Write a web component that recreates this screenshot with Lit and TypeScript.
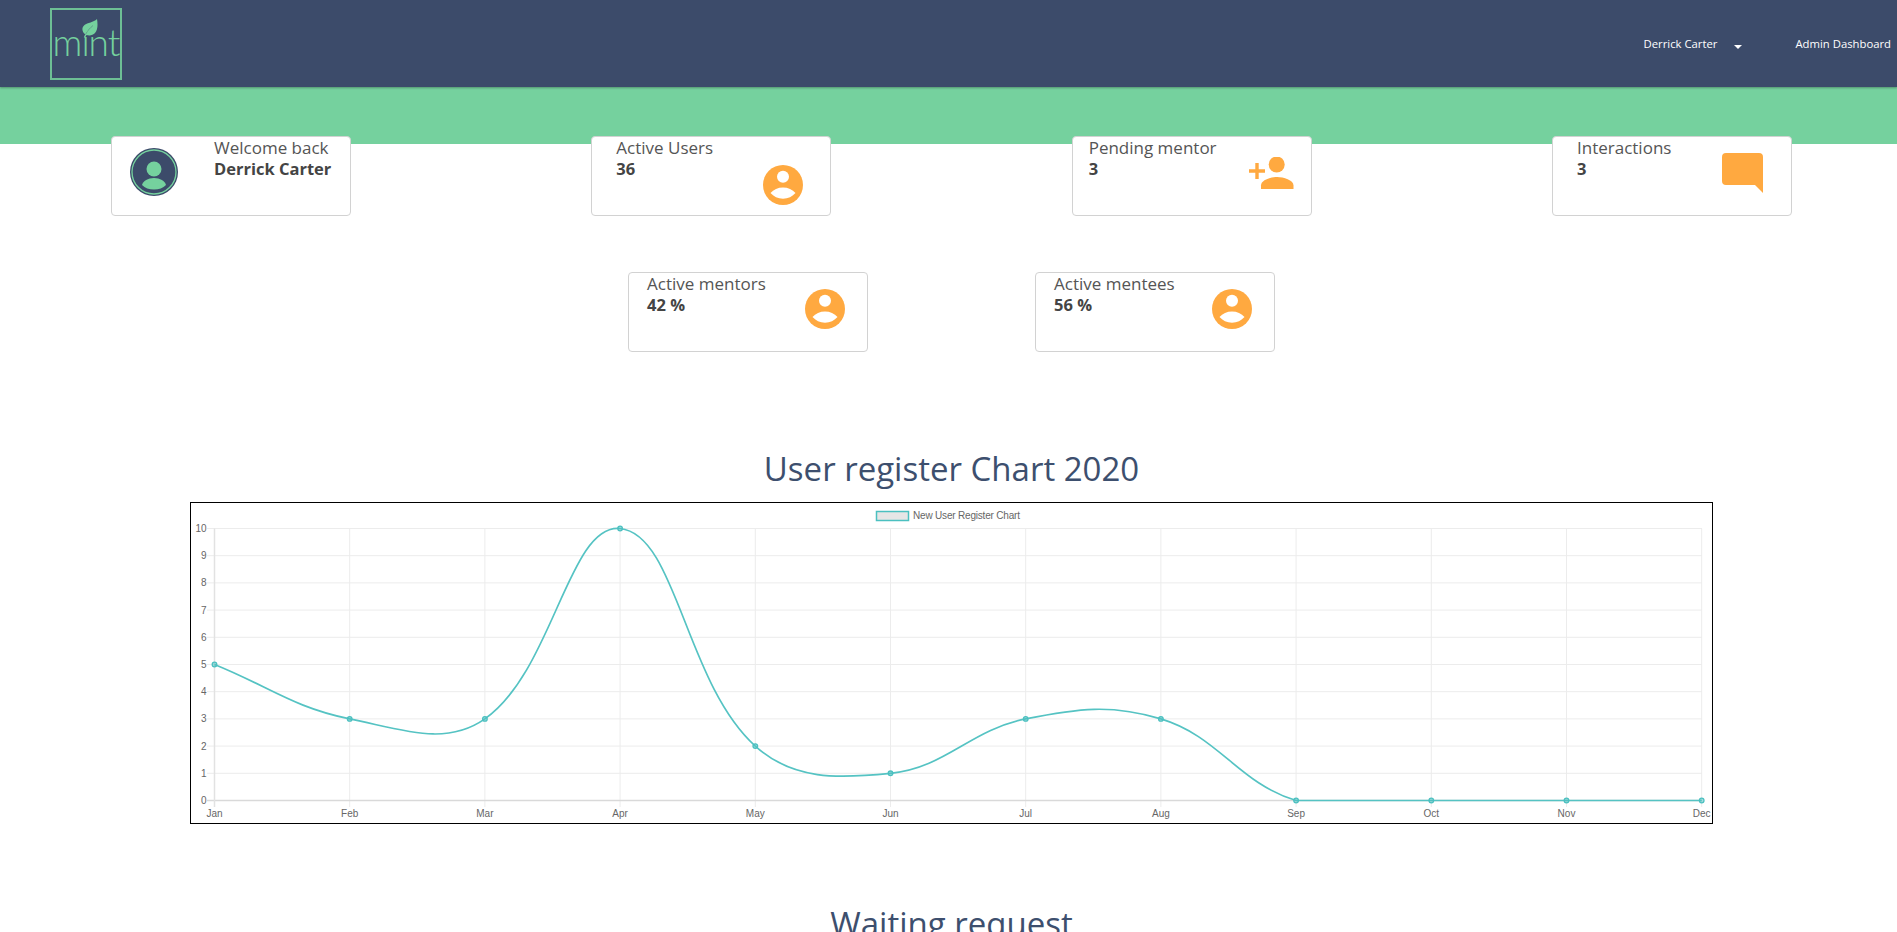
import { LitElement, html, css, svg } from "lit";
import { customElement } from "lit/decorators.js";

const MONTHS = ["Jan","Feb","Mar","Apr","May","Jun","Jul","Aug","Sep","Oct","Nov","Dec"];
const DATA = [5,3,3,10,2,1,3,3,0,0,0,0];
const X0 = 214.5, XSTEP = 135.2, Y0 = 800.5, YSTEP = 27.2;
const px = (i: number) => X0 + i * XSTEP;
const py = (v: number) => Y0 - v * YSTEP;

function curve(): string {
  const pts = DATA.map((v, i) => ({ x: px(i), y: py(v) }));
  const t = 0.4;
  const cps = pts.map((c, i) => {
    const p = pts[Math.max(i - 1, 0)];
    const n = pts[Math.min(i + 1, pts.length - 1)];
    const d01 = Math.hypot(c.x - p.x, c.y - p.y);
    const d12 = Math.hypot(n.x - c.x, n.y - c.y);
    const sum = d01 + d12 || 1;
    const fa = (t * d01) / sum;
    const fb = (t * d12) / sum;
    return {
      px: c.x - fa * (n.x - p.x),
      py: Math.min(Y0, c.y - fa * (n.y - p.y)),
      nx: c.x + fb * (n.x - p.x),
      ny: Math.min(Y0, c.y + fb * (n.y - p.y)),
    };
  });
  let d = `M${pts[0].x} ${pts[0].y}`;
  for (let i = 1; i < pts.length; i++) {
    d += ` C${cps[i - 1].nx.toFixed(2)} ${cps[i - 1].ny.toFixed(2)} ${cps[i].px.toFixed(2)} ${cps[i].py.toFixed(2)} ${pts[i].x} ${pts[i].y}`;
  }
  return d;
}

const personCircle = svg`<svg class="ico" viewBox="0 0 40 40"><circle cx="20" cy="20" r="20" fill="#ffa940"/><circle cx="20" cy="11.700" r="6" fill="#fff"/><path d="M7.500 28C10.500 24.500 15 22.500 20 22.500S29.500 24.500 32.500 28C29.500 31.500 25 33.700 20 33.700S10.500 31.500 7.500 28z" fill="#fff"/></svg>`;
const personAdd = svg`<svg class="add" viewBox="0 0 45 32"><path d="M0 12.300h6.300V6h3.400v6.300H16v3.400H9.700V22H6.300v-6.300H0z" fill="#ffa940"/><circle cx="27.700" cy="7.500" r="8" fill="#ffa940"/><path d="M12 32v-3.500C12 23 22 20 28.200 20S44.500 23 44.500 28.500V32z" fill="#ffa940"/></svg>`;
const chat = svg`<svg class="chat" viewBox="0 0 41 40"><path d="M4 0h33a4 4 0 0 1 4 4v36l-8-8H4a4 4 0 0 1-4-4V4a4 4 0 0 1 4-4z" fill="#ffa940"/></svg>`;
const avatar = svg`<svg class="avatar" viewBox="0 0 48 48"><circle cx="24" cy="24" r="24" fill="#3c4b6a"/><circle cx="24" cy="24" r="22" fill="none" stroke="#75d19e" stroke-width="1.300"/><circle cx="24" cy="21" r="7.500" fill="#75d19e"/><path d="M12 37C13 33 18 30 24 30S35 33 36 37C33 40 29 41.500 24 41.500S15 40 12 37z" fill="#75d19e"/></svg>`;

@customElement("app-root")
export class AppRoot extends LitElement {
  static styles = css`
    :host { display: block; height: 932px; overflow: hidden; background: #fff; font-family: "Open Sans", "Noto Sans", sans-serif; color: #4a4a4a; }
    .top { height: 87px; background: #3c4b6a; display: flex; align-items: center; padding: 0 6px 0 50px; box-shadow: 0 1px 2px rgba(0,0,0,.3); position: relative; }
    .logo { width: 72px; height: 72px; box-sizing: border-box; border: 2px solid #6dbf95; display: flex; flex-direction: column; align-items: center; color: #75d19e; overflow: hidden; }
    .leaf { width: 16px; height: 19px; margin: 9px 0 0 8px; flex: none; }
    .mint { font: 300 37px/30px Lato, sans-serif; letter-spacing: -1px; margin-top: -11px; }
    nav { margin-left: auto; display: flex; align-items: center; color: #fff; font-size: 11.300px; font-weight: 500; }
    .caret { width: 0; height: 0; border: 4.500px solid transparent; border-top: 4.500px solid #fff; border-bottom: 0; margin: 6px 53px 0 17px; }
    .band { height: 57px; background: #75d19e; }
    .main { padding-left: 6px; }
    .row { display: flex; }
    .r1 { justify-content: space-between; margin: -8px 105px 0 105px; }
    .r2 { justify-content: center; gap: 167px; margin-top: 56px; }
    .card { width: 240px; height: 80px; box-sizing: border-box; background: #fff; border: 1px solid #d2d2d2; border-radius: 4px; display: flex; align-items: flex-start; line-height: 21px; }
    .r1 .card { padding: 0 27px 0 24px; }
    .r2 .card { padding: 0 22px 0 18px; }
    .r1 .card.welcome { padding: 0 0 0 18px; }
    .r1 .card.pending { padding-left: 16px; }
    .label { white-space: nowrap; font-size: 17px; color: #555; }
    .value { font-weight: 700; white-space: nowrap; font-size: 16.500px; color: #444; }
    .ico { width: 40px; height: 40px; margin: 28px 0 0 auto; flex: none; }
    .r2 .ico { margin-top: 16px; }
    .add { width: 45px; height: 32px; margin: 20px -10px 0 auto; flex: none; }
    .chat { width: 41px; height: 40px; margin: 16px 1px 0 auto; flex: none; }
    .avatar { width: 48px; height: 48px; margin: 11px 36px 0 0; flex: none; order: -1; }
    h2 { margin: 0; text-align: center; font-size: 33px; line-height: 45px; font-weight: 400; color: #3d4f6e; }
    .t1 { margin-top: 94px; height: 56px; }
    .t2 { margin-top: 77px; }
    .frame { width: 1523px; height: 322px; box-sizing: border-box; border: 1px solid #000; margin: 0 auto; }
    .frame svg { display: block; }
    .tick { font: 10px "Liberation Sans", Arial, sans-serif; fill: #666; }
    .grid { stroke: #ececec; stroke-width: 1; }
  `;

  private card(label: string, value: string, icon: unknown, cls = "") {
    return html`<div class="card ${cls}"><div><div class="label">${label}</div><div class="value">${value}</div></div>${icon}</div>`;
  }

  private chart() {
    return html`<svg width="1521" height="320" viewBox="191 503 1521 320">
      ${DATA.map((_, i) => svg`<line class="grid" x1="${px(i)}" x2="${px(i)}" y1="528.500" y2="807"/>`)}
      ${[1,2,3,4,5,6,7,8,9,10].map(v => svg`<line class="grid" x1="207" x2="1702" y1="${py(v)}" y2="${py(v)}"/>`)}
      <line x1="207" x2="1702" y1="${Y0}" y2="${Y0}" stroke="#d9d9d9" stroke-width="1.500"/>
      <line x1="214.500" x2="214.500" y1="528.500" y2="807" stroke="#e2e2e2" stroke-width="1.500"/>
      ${[0,1,2,3,4,5,6,7,8,9,10].map(v => svg`<text class="tick" x="206.500" y="${py(v) + 3.500}" text-anchor="end">${v}</text>`)}
      ${MONTHS.map((m, i) => svg`<text class="tick" x="${px(i)}" y="817" text-anchor="middle">${m}</text>`)}
      <rect x="876.500" y="511.500" width="32" height="9" fill="#e6e6e6" stroke="#4bc0c0" stroke-width="1.500"/>
      <text class="tick" x="913" y="518.500" textLength="107">New User Register Chart</text>
      <path d="${curve()}" fill="none" stroke="#55c3c3" stroke-width="1.700"/>
      ${DATA.map((v, i) => svg`<circle cx="${px(i)}" cy="${py(v)}" r="2.300" fill="rgba(75,192,192,.5)" stroke="#4bc0c0" stroke-width="1.300"/>`)}
    </svg>`;
  }

  render() {
    return html`
      <div class="top">
        <div class="logo">
          <svg class="leaf" viewBox="0 0 16 19"><path d="M15 0C15.800 5 16 10.500 13 14 11 16.300 7.500 17 4.500 16L3 18.800 1.800 18.200 3.200 15.300C-.3 12.500-.5 8.500 2.500 6 5.500 3.500 11.500 3.500 15 0z" fill="#75d19e"/><path d="M3.500 15.500C5.500 11.500 8 9 11 6.500" fill="none" stroke="#3c4b6a" stroke-width=".6" opacity=".6"/></svg>
          <div class="mint">mint</div>
        </div>
        <nav>
          <span>Derrick Carter</span><span class="caret"></span><span>Admin Dashboard</span>
        </nav>
      </div>
      <div class="band"></div>
      <div class="main">
        <div class="row r1">
          ${this.card("Welcome back", "Derrick Carter", avatar, "welcome")}
          ${this.card("Active Users", "36", personCircle)}
          ${this.card("Pending mentor", "3", personAdd, "pending")}
          ${this.card("Interactions", "3", chat)}
        </div>
        <div class="row r2">
          ${this.card("Active mentors", "42 %", personCircle)}
          ${this.card("Active mentees", "56 %", personCircle)}
        </div>
        <h2 class="t1">User register Chart 2020</h2>
        <div class="frame">${this.chart()}</div>
        <h2 class="t2">Waiting request</h2>
      </div>
    `;
  }
}
